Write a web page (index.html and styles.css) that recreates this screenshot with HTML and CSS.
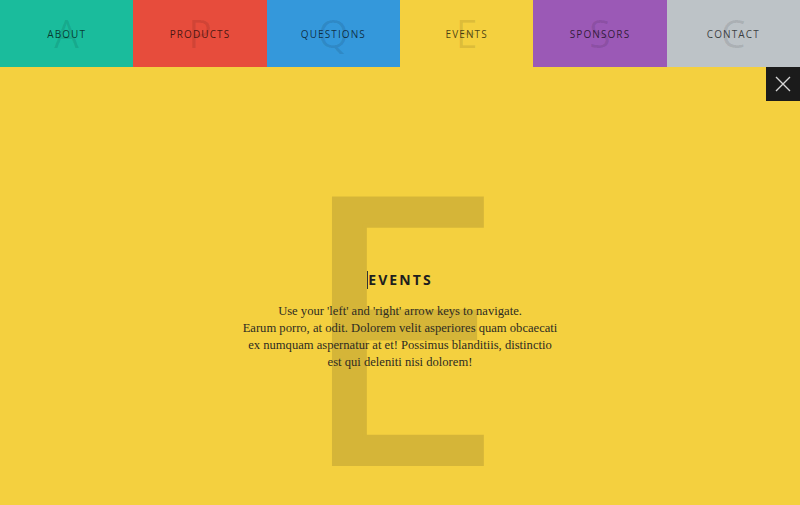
FILE: index.html
```html
<!DOCTYPE html>
<html lang="en">
<head>
<meta charset="utf-8">
<title>Events</title>
<link rel="stylesheet" href="styles.css">
</head>
<body>
<nav class="nav">
  <a class="nav-item teal"><span class="nav-letter">A</span><span class="nav-label">About</span></a>
  <a class="nav-item red"><span class="nav-letter">P</span><span class="nav-label">Products</span></a>
  <a class="nav-item blue"><span class="nav-letter">Q</span><span class="nav-label">Questions</span></a>
  <a class="nav-item yellow"><span class="nav-letter">E</span><span class="nav-label">Events</span></a>
  <a class="nav-item purple"><span class="nav-letter">S</span><span class="nav-label">Sponsors</span></a>
  <a class="nav-item grey"><span class="nav-letter">C</span><span class="nav-label">Contact</span></a>
</nav>
<main class="panel">
  <div class="panel-letter" aria-hidden="true">E</div>
  <button class="close" aria-label="Close">
    <svg width="16" height="16" viewBox="0 0 16 16"><path d="M1 1L15 15M15 1L1 15" stroke="#d6d6d6" stroke-width="1.4" fill="none"/></svg>
  </button>
  <section class="content">
    <h1 class="title"><span class="caret"></span>Events</h1>
    <p class="text">Use your 'left' and 'right' arrow keys to navigate.<br>Earum porro, at odit. Dolorem velit asperiores quam obcaecati ex numquam aspernatur at et! Possimus blanditiis, distinctio est qui deleniti nisi dolorem!</p>
  </section>
</main>
</body>
</html>
```
FILE: styles.css
```css
* { box-sizing: border-box; }
html, body { margin: 0; padding: 0; }
body {
  width: 800px;
  height: 505px;
  overflow: hidden;
  font-family: "Open Sans", sans-serif;
  background: #f4d03f;
}
.nav {
  display: flex;
  height: 67px;
}
.nav-item {
  flex: 1;
  position: relative;
  display: flex;
  align-items: center;
  justify-content: center;
  overflow: hidden;
}
.teal { background: #1abc9c; }
.red { background: #e74c3c; }
.blue { background: #3498db; }
.yellow { background: #f4d03f; }
.purple { background: #9b59b6; }
.grey { background: #bdc3c7; }
.nav-letter {
  position: absolute;
  top: 13px;
  left: 0;
  right: 0;
  text-align: center;
  font-size: 39px;
  line-height: 1;
  color: rgba(0, 0, 0, 0.1);
}
.nav-label {
  position: relative;
  font-size: 10px;
  line-height: 1;
  letter-spacing: 1.1px;
  text-transform: uppercase;
  color: rgba(0, 0, 0, 0.7);
}
.panel {
  position: relative;
  height: 438px;
  overflow: hidden;
  background: #f4d03f;
}
.panel-letter {
  position: absolute;
  top: 67px;
  left: 0;
  right: 0;
  padding-left: 2px;
  text-align: center;
  font-size: 372px;
  line-height: 1;
  color: #d5b538;
  -webkit-text-stroke: 4px #d5b538;
}
.close {
  position: absolute;
  top: 0;
  right: 0;
  width: 34px;
  height: 34px;
  border: 0;
  padding: 0;
  background: #1b1b1b;
  display: flex;
  align-items: center;
  justify-content: center;
}
.content {
  position: relative;
  padding-top: 203px;
  text-align: center;
}
.title {
  margin: 0;
  font-size: 14px;
  line-height: 20px;
  font-weight: 700;
  letter-spacing: 2.1px;
  text-transform: uppercase;
  color: #1e1e1e;
}
.caret {
  display: inline-block;
  width: 1px;
  height: 18px;
  background: #333;
  vertical-align: -4px;
}
.text {
  width: 318px;
  margin: 13px auto 0;
  font-family: "Liberation Serif", serif;
  font-size: 12.6px;
  line-height: 17px;
  color: #2e2c22;
}
```
